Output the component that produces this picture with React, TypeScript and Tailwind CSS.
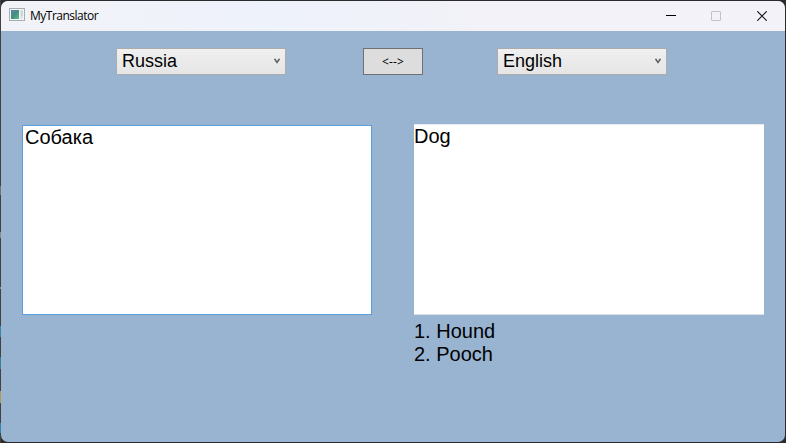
import React from "react";

function AppIcon() {
  return (
    <svg width="16" height="14" viewBox="0 0 16 14" className="shrink-0 -translate-y-px">
      <defs>
        <linearGradient id="pane" x1="0" y1="0" x2="1" y2="1">
          <stop offset="0" stopColor="#5b83b8" />
          <stop offset="0.5" stopColor="#43907f" />
          <stop offset="1" stopColor="#62b58a" />
        </linearGradient>
      </defs>
      <rect x="0.5" y="0.5" width="15" height="12" fill="#f4f5f6" stroke="#a9acb0" />
      <rect x="2" y="2" width="8" height="9" fill="url(#pane)" />
      <rect x="11" y="2" width="3" height="9" fill="#dfe4ea" />
      <rect x="12" y="3" width="2" height="5" fill="#c4d9cf" />
    </svg>
  );
}

function TitleBar() {
  return (
    <header className="flex h-[30px] shrink-0 items-center bg-[linear-gradient(90deg,#f2f3f8,#eef2fb_35%,#f2f2f8_60%)] pl-2">
      <AppIcon />
      <h1 className="ml-[5px] font-['Open_Sans','Noto_Sans',sans-serif] text-[12px] leading-4 tracking-[-0.5px] text-black">
        MyTranslator
      </h1>
      <div className="ml-auto flex h-full">
        <button className="flex w-[46px] items-center justify-center" aria-label="Minimize">
          <svg width="10" height="10" viewBox="0 0 10 10">
            <path d="M0 4.5H10" stroke="#000" />
          </svg>
        </button>
        <button className="flex w-[44px] items-center justify-center" aria-label="Maximize">
          <svg width="10" height="10" viewBox="0 0 10 10">
            <rect x="0.5" y="0.5" width="9" height="9" rx="0.5" fill="none" stroke="#c2c2c7" />
          </svg>
        </button>
        <button className="flex w-[47px] items-center justify-center" aria-label="Close">
          <svg width="10" height="10" viewBox="0 0 10 10">
            <path d="M0.3 0.3L9.7 9.7M9.7 0.3L0.3 9.7" stroke="#111" strokeWidth="1.1" />
          </svg>
        </button>
      </div>
    </header>
  );
}

function LanguageBox({ language }: { language: string }) {
  return (
    <div className="flex h-[27px] w-[170px] items-center justify-between border border-[#acacac] bg-linear-to-b from-[#f0f0f0] to-[#e5e5e5] pr-[5px] pl-[5px]">
      <span className="text-[18px] leading-[25px]">{language}</span>
      <svg width="6" height="6" viewBox="0 0 6 6" className="mb-0.5">
        <path d="M0.5 0.8L3 4.4L5.5 0.8" fill="none" stroke="#606060" strokeWidth="1.5" />
      </svg>
    </div>
  );
}

function ScreenEdge() {
  return (
    <div className="flex w-px shrink-0 flex-col bg-[#45413f]">
      <div className="mt-[186px] h-[9px] bg-[#77716d]" />
      <div className="mt-[37px] h-1.5 bg-[#8d8886]" />
      <div className="mt-[49px] h-0.5 bg-[#8d8886]" />
      <div className="mt-[37px] h-[11px] bg-[#3a86a3]" />
      <div className="mt-5 h-3 bg-[#3a7f98]" />
      <div className="mt-[22px] h-3 bg-[#b49a50]" />
      <div className="mt-5 h-2.5 bg-[#2f86a5]" />
    </div>
  );
}

export default function App() {
  return (
    <div className="flex h-[443px] w-[786px] overflow-hidden bg-[#202022] font-['Liberation_Sans',Arial,sans-serif] text-black">
      <ScreenEdge />
      <div className="flex w-[785px] bg-[#2b2a2c] py-px pr-px">
        <main className="flex flex-1 flex-col overflow-hidden rounded-[7px] bg-[#99b4d1]">
          <TitleBar />
          <section className="mt-[17px] flex pl-[115px]">
            <LanguageBox language="Russia" />
            <button className="ml-[77px] flex h-[27px] w-[60px] items-center justify-center border border-[#707070] bg-[#dddddd] pt-px font-['Open_Sans','Noto_Sans',sans-serif] text-[12px] leading-4 tracking-[0.2px]">
              &lt;--&gt;
            </button>
            <div className="ml-[74px]">
              <LanguageBox language="English" />
            </div>
          </section>
          <section className="mt-[49px] flex items-start pl-[21px]">
            <div className="mt-px h-[190px] w-[350px] border border-[#569de5] bg-white pl-0.5 text-[20px] leading-[23px]">
              Собака
            </div>
            <div className="ml-[42px] w-[350px] text-[20px] leading-[23px]">
              <div className="h-[191px] border-y border-t-[#e5ecf3] border-b-[#d9e2eb] bg-white">Dog</div>
              <div className="mt-[5px]">1. Hound</div>
              <div>2. Pooch</div>
            </div>
          </section>
        </main>
      </div>
    </div>
  );
}
